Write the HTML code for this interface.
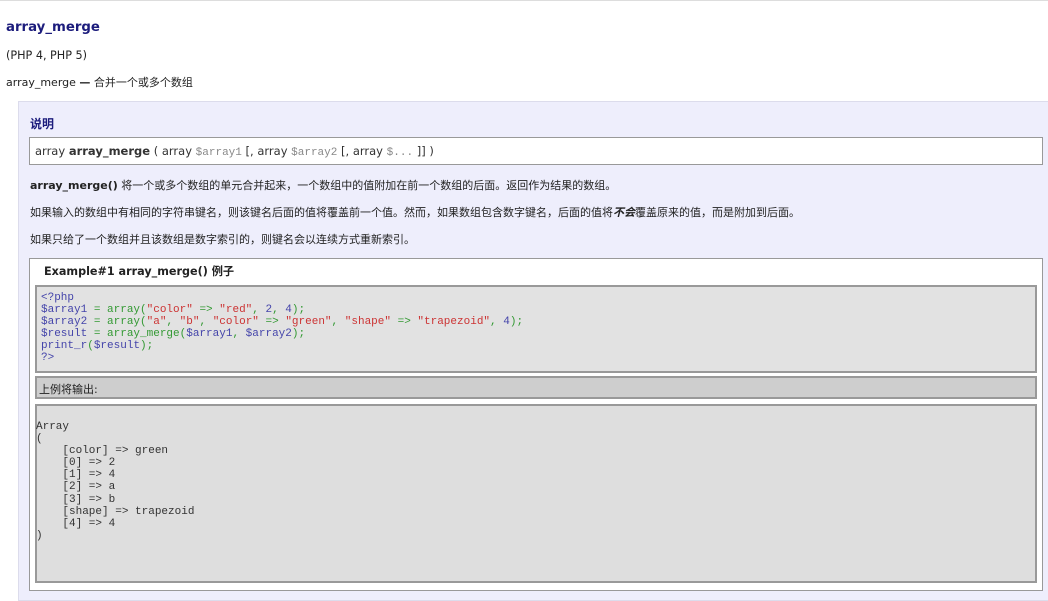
<!DOCTYPE html>
<html><head><meta charset="utf-8"><style>
*{margin:0;padding:0;box-sizing:border-box}
body{width:1048px;height:597px;overflow:hidden;background:#fff;font-family:"DejaVu Sans","Liberation Sans","Noto Sans CJK SC",sans-serif;color:#222;position:relative}
.a{position:absolute;white-space:nowrap}
.mono{font-family:"Liberation Mono","DejaVu Sans Mono",monospace}
</style></head><body>
<div class="a" style="left:0;top:0;width:1048px;height:1px;background:#ddd"></div>
<div class="a" style="left:6px;top:20px;font-size:13.3px;font-weight:bold;color:#1c1c7c">array_merge</div>
<div class="a" style="left:6px;top:49px;font-size:11.2px">(PHP 4, PHP 5)</div>
<div class="a" style="left:6px;top:74px;font-size:11px">array_merge <b>—</b> 合并一个或多个数组</div>
<div class="a" style="left:18px;top:101px;width:1040px;height:500px;background:#eeeefc;border:1px solid #dcdcec"></div>
<div class="a" style="left:30px;top:115px;font-size:12px;font-weight:bold;color:#1c1c7c">说明</div>
<div class="a" style="left:29px;top:137px;width:1014px;height:28px;background:#fff;border:1px solid #999"></div>
<div class="a" style="left:35px;top:144px;font-size:11.5px;color:#333">array <b>array_merge</b> ( array <span class="mono" style="color:#888;font-size:11px">$array1</span> [, array <span class="mono" style="color:#888;font-size:11px">$array2</span> [, array <span class="mono" style="color:#888;font-size:11px">$...</span> ]] )</div>
<div class="a" style="left:30px;top:177px;font-size:11px"><b>array_merge()</b> 将一个或多个数组的单元合并起来，一个数组中的值附加在前一个数组的后面。返回作为结果的数组。</div>
<div class="a" style="left:30px;top:204px;font-size:11px">如果输入的数组中有相同的字符串键名，则该键名后面的值将覆盖前一个值。然而，如果数组包含数字键名，后面的值将<b><i>不会</i></b>覆盖原来的值，而是附加到后面。</div>
<div class="a" style="left:30px;top:231px;font-size:11px">如果只给了一个数组并且该数组是数字索引的，则键名会以连续方式重新索引。</div>
<div class="a" style="left:29px;top:258px;width:1014px;height:333px;background:#fff;border:1px solid #999"></div>
<div class="a" style="left:44px;top:263px;font-size:11.2px;font-weight:bold">Example#1 array_merge() 例子</div>
<div class="a" style="left:35px;top:285px;width:1002px;height:88px;background:#e2e2e2;border:2px solid #999"></div>
<div class="a mono" style="left:41px;top:292px;font-size:11px;line-height:12px;color:#44a">
&lt;?php<br>
$array1 <span style="color:#393">= array(</span><span style="color:#c33">"color"</span> <span style="color:#393">=&gt;</span> <span style="color:#c33">"red"</span><span style="color:#393">,</span> 2<span style="color:#393">,</span> 4<span style="color:#393">);</span><br>
$array2 <span style="color:#393">= array(</span><span style="color:#c33">"a"</span><span style="color:#393">,</span> <span style="color:#c33">"b"</span><span style="color:#393">,</span> <span style="color:#c33">"color"</span> <span style="color:#393">=&gt;</span> <span style="color:#c33">"green"</span><span style="color:#393">,</span> <span style="color:#c33">"shape"</span> <span style="color:#393">=&gt;</span> <span style="color:#c33">"trapezoid"</span><span style="color:#393">,</span> 4<span style="color:#393">);</span><br>
$result <span style="color:#393">= array_merge(</span>$array1<span style="color:#393">,</span> $array2<span style="color:#393">);</span><br>
print_r<span style="color:#393">(</span>$result<span style="color:#393">);</span><br>
?&gt;</div>
<div class="a" style="left:35px;top:376px;width:1002px;height:23px;background:#cecece;border:2px solid #999"></div>
<div class="a" style="left:39px;top:381px;font-size:11px">上例将输出:</div>
<div class="a" style="left:35px;top:404px;width:1002px;height:179px;background:#dedede;border:2px solid #999"></div>
<div class="a mono" style="left:36px;top:421px;font-size:11px;line-height:12.1px;color:#333;white-space:pre">Array
(
    [color] =&gt; green
    [0] =&gt; 2
    [1] =&gt; 4
    [2] =&gt; a
    [3] =&gt; b
    [shape] =&gt; trapezoid
    [4] =&gt; 4
)</div>
</body></html>
